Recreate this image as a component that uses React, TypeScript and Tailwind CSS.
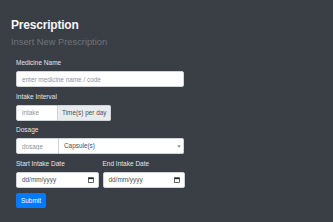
import React from "react";

const font = { fontFamily: '"Liberation Sans", Arial, sans-serif' };

function Label({ children }: { children: React.ReactNode }) {
  return (
    <div className="h-[10px] mb-[3px] text-[6.5px] leading-[10px] whitespace-nowrap text-[#e4e6e8]">{children}</div>
  );
}

function CalendarIcon() {
  return (
    <svg width="6" height="6" viewBox="0 0 12 12" className="shrink-0">
      <rect x="1" y="1.5" width="10" height="9.5" fill="none" stroke="#212529" strokeWidth="1.4" />
      <rect x="1" y="1.5" width="10" height="2.8" fill="#212529" />
    </svg>
  );
}

function DateBox() {
  return (
    <div className="w-full h-[16px] flex items-center justify-between bg-white border border-[#ced4da] rounded-[2px] pl-[5px] pr-[4px] text-[6.4px] text-[#495057]">
      <span>dd/mm/yyyy</span>
      <CalendarIcon />
    </div>
  );
}

export default function App() {
  return (
    <div
      style={font}
      className="w-[333px] h-[222px] overflow-hidden bg-[#373b43] bg-[radial-gradient(circle,#3c4048_0.6px,transparent_0.8px)] bg-[length:2px_2px] pt-[18px] pl-[11px]"
    >
      <div className="text-[12px] leading-[14px] font-bold text-[#f5f5f5] tracking-[-0.2px]">Prescription</div>
      <div className="mt-[5px] text-[9.3px] leading-[11px] text-[#70757c]">Insert New Prescription</div>

      <div className="mt-[10px] ml-[5px] w-[168px]">
        <div className="mb-[4.5px]">
          <Label>Medicine Name</Label>
          <input
            className="block w-full h-[16px] bg-white border border-[#ced4da] rounded-[2px] px-[5px] text-[6.4px] text-[#495057] placeholder:text-[#8e959c] outline-none"
            placeholder="enter medicine name / code"
          />
        </div>

        <div className="mb-[4.5px]">
          <Label>Intake Interval</Label>
          <div className="flex h-[16px]">
            <input
              className="block w-[42px] h-[16px] bg-white border border-[#ced4da] rounded-l-[2px] px-[5px] text-[6.4px] text-[#495057] placeholder:text-[#8e959c] outline-none"
              placeholder="intake"
            />
            <div className="w-[53px] h-[16px] flex items-center px-[4px] whitespace-nowrap bg-[#e9ecef] border border-l-0 border-[#ced4da] rounded-r-[2px] text-[6.4px] text-[#495057]">
              Time(s) per day
            </div>
          </div>
        </div>

        <div className="mb-[4.5px]">
          <Label>Dosage</Label>
          <div className="flex h-[16px]">
            <input
              className="block w-[43px] h-[16px] bg-white border border-[#ced4da] rounded-l-[2px] px-[5px] text-[6.4px] text-[#495057] placeholder:text-[#8e959c] outline-none"
              placeholder="dosage"
            />
            <div className="flex-1 h-[16px] flex items-center justify-between pl-[5px] pr-[2px] bg-white border border-l-0 border-[#ced4da] rounded-r-[2px] text-[6.4px] text-[#495057]">
              <span>Capsule(s)</span>
              <svg width="4" height="3" viewBox="0 0 8 6">
                <path d="M0.5 1 L4 5 L7.5 1 Z" fill="#6c6c6c" />
              </svg>
            </div>
          </div>
        </div>

        <div className="flex gap-[4px] mb-[5.5px] w-[169px]">
          <div className="flex-1">
            <Label>Start Intake Date</Label>
            <DateBox />
          </div>
          <div className="flex-1">
            <Label>End Intake Date</Label>
            <DateBox />
          </div>
        </div>

        <button className="w-[30px] h-[15px] flex items-center justify-center bg-[#007bff] rounded-[2px] text-[6.4px] text-white">
          Submit
        </button>
      </div>
    </div>
  );
}
